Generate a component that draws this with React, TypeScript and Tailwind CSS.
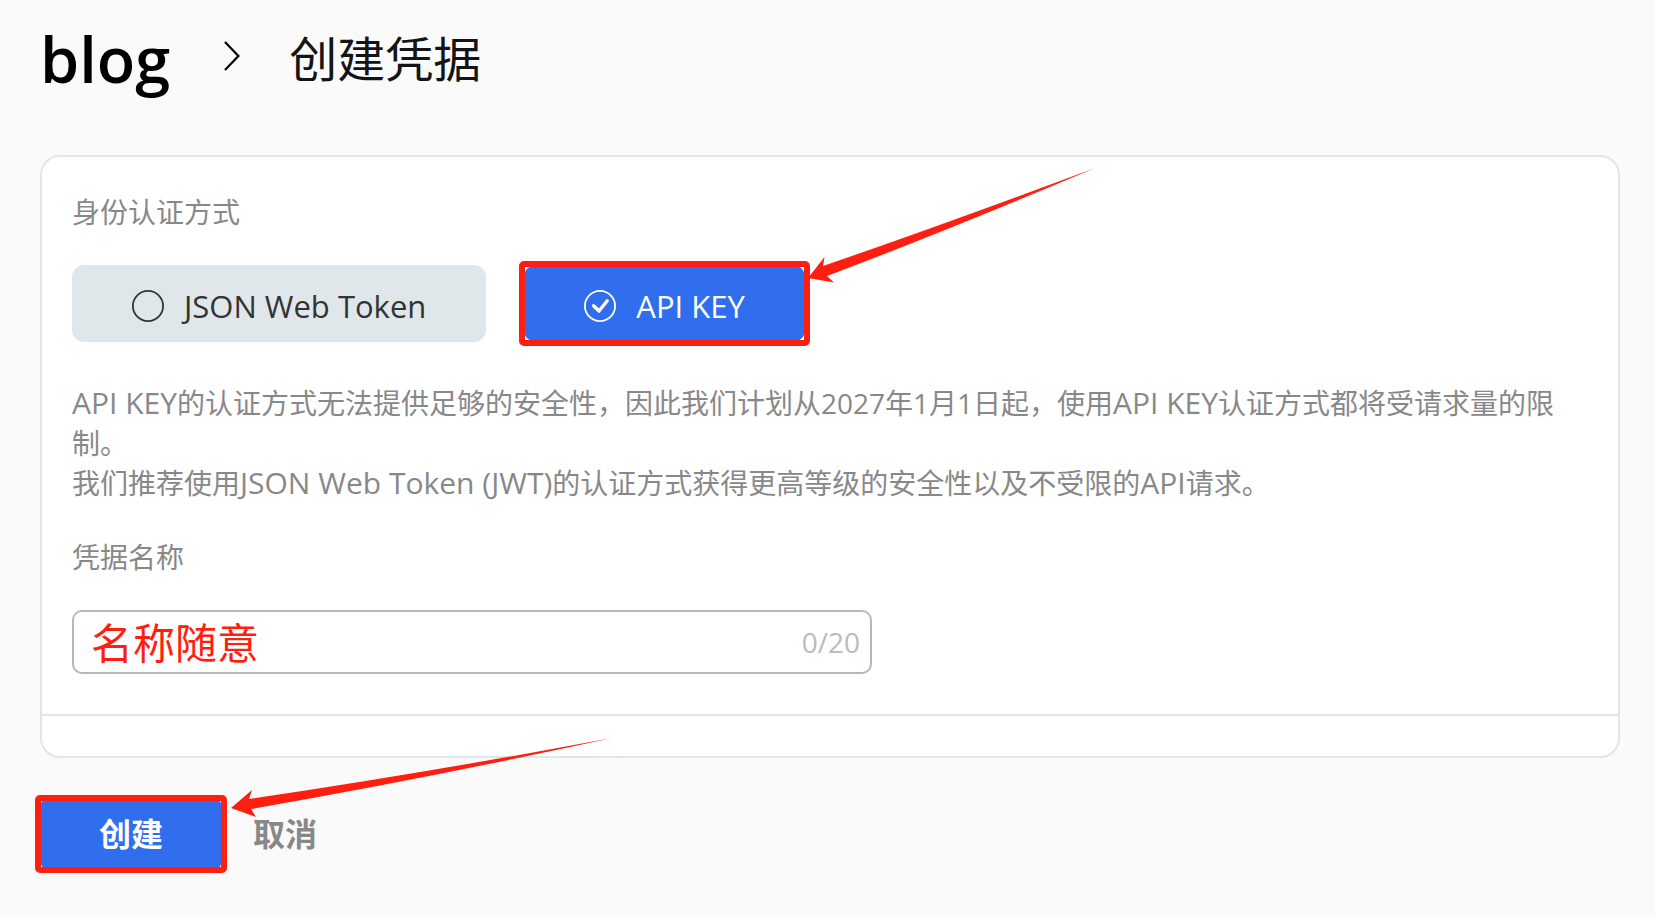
import { useState, type ReactNode } from "react";

type Method = "jwt" | "key";

const METHODS: { id: Method; label: string }[] = [
  { id: "jwt", label: "JSON Web Token" },
  { id: "key", label: "API KEY" },
];

function RadioMark({ checked }: { checked: boolean }) {
  return (
    <svg viewBox="0 0 32 32" className="size-8 shrink-0" fill="none" stroke="currentColor" aria-hidden="true">
      <circle cx="16" cy="16" r="15.1" strokeWidth="1.8" />
      {checked && <path d="M9.6 15.8l5.4 5.2 8.2-10.2" strokeWidth="3.4" strokeLinecap="round" strokeLinejoin="round" />}
    </svg>
  );
}

function Highlight() {
  return (
    <span className="pointer-events-none absolute -inset-x-[5px] -inset-y-1 rounded-[5px] border-6 border-[#ff1f10]" />
  );
}

function Latin({ children }: { children: ReactNode }) {
  return <span className="text-[30px] leading-none">{children}</span>;
}

export default function App() {
  const [method, setMethod] = useState<Method>("key");
  const [name, setName] = useState("");

  return (
    <main className="min-h-screen bg-[#fafafa] pr-[35px] pb-12 pl-10 font-['Open_Sans','Noto_Sans_CJK_SC',sans-serif] text-[28px] leading-10 text-[#888888]">
      <nav className="flex items-center pt-[19px] pb-14" aria-label="breadcrumb">
        <a href="#blog" className="text-[63px] leading-20 font-semibold text-black">
          blog
        </a>
        <svg viewBox="0 0 16 38" className="mr-[49px] ml-[54px] h-[38px] w-4" fill="none" stroke="#000" strokeWidth="2.2" aria-hidden="true">
          <path d="M1 2l13.4 14L1 30" />
        </svg>
        <h1 className="text-[48px] leading-20 text-[#141414]">创建凭据</h1>
      </nav>

      <form onSubmit={(e) => e.preventDefault()}>
        <section className="rounded-[20px] border-2 border-[#e0e7ea] bg-white">
          <div className="px-[30px] pt-[35px] pb-10">
            <div id="method-label">身份认证方式</div>
            <div role="radiogroup" aria-labelledby="method-label" className="mt-[33px] flex gap-[38px]">
              {METHODS.map(({ id, label }) => {
                const checked = method === id;
                return (
                  <label
                    key={id}
                    className={`relative flex h-[77px] cursor-pointer items-center gap-5 rounded-xl px-15 pt-1 text-[31px] ${
                      checked ? "bg-[#306eed] text-white" : "bg-[#e0e7ea] text-[#333333]"
                    }`}
                  >
                    <input
                      type="radio"
                      name="method"
                      value={id}
                      checked={checked}
                      onChange={() => setMethod(id)}
                      className="sr-only"
                    />
                    <RadioMark checked={checked} />
                    {label}
                    {id === "key" && (
                      <>
                        <Highlight />
                        <svg
                          viewBox="809 168 287 116"
                          className="pointer-events-none absolute bottom-[58px] left-full ml-[3px] h-[116px] w-[287px]"
                          fill="#ff1f10"
                          aria-hidden="true"
                        >
                          <path d="M809 278L825.5 257L824 266Q940 226 1096 168Q950 230 828 276L835 282.5Z" />
                        </svg>
                      </>
                    )}
                  </label>
                );
              })}
            </div>

            <p className="mt-[41px]">
              <Latin>API KEY</Latin>的认证方式无法提供足够的安全性，因此我们计划从2027年1月1日起，使用<Latin>API KEY</Latin>
              认证方式都将受请求量的限<span className="whitespace-nowrap">制。</span>
              <br />
              我们推荐使用<Latin>JSON Web Token (JWT)</Latin>的认证方式获得更高等级的安全性以及不受限的<Latin>API</Latin>
              请求。
            </p>

            <label htmlFor="credential-name" className="mt-[34px] block">
              凭据名称
            </label>
            <div className="mt-[33px] flex h-16 max-w-[800px] items-center rounded-[10px] border-2 border-[#b8b8b8] pr-[10px] pl-[17px]">
              <input
                id="credential-name"
                type="text"
                maxLength={20}
                value={name}
                onChange={(e) => setName(e.target.value)}
                placeholder="名称随意"
                className="h-full min-w-0 flex-1 bg-transparent text-[42px] leading-15 text-[#ff1f10] outline-none placeholder:text-[#ff1f10]"
              />
              <span className="text-[#bbbbbb]">{name.length}/20</span>
            </div>
          </div>
          <div className="h-[42px] border-t-2 border-[#e0e7ea]" />
        </section>

        <div className="mt-[41px] flex items-center text-[32px] font-bold">
          <button type="submit" className="relative h-[70px] rounded-lg bg-[#306eed] px-[59px] text-white">
            创建
            <Highlight />
            <svg
              viewBox="232 738 381 80"
              className="pointer-events-none absolute bottom-[51px] left-full ml-[9px] h-20 w-[381px] max-w-none"
              fill="#ff1f10"
              aria-hidden="true"
            >
              <path d="M232 808L253 790L250 799Q420 774 613 738Q430 778 252 809L257 817Z" />
            </svg>
          </button>
          <button type="button" className="px-[31px]">
            取消
          </button>
        </div>
      </form>
    </main>
  );
}
